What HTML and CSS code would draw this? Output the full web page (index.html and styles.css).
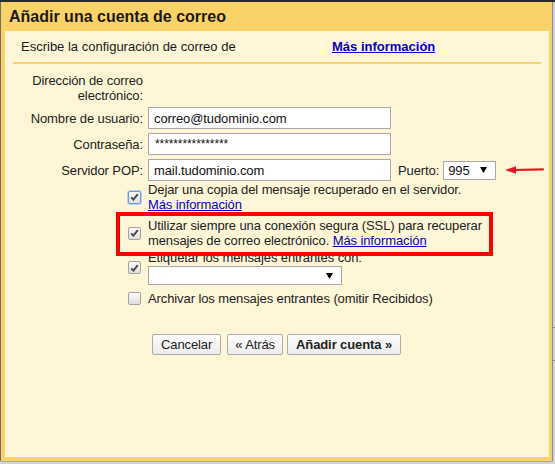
FILE: index.html
```html
<!DOCTYPE html>
<html lang="es">
<head>
<meta charset="utf-8">
<title>Añadir una cuenta de correo</title>
<link rel="stylesheet" href="styles.css">
</head>
<body>
<div class="page">
  <div class="dialog">
    <div class="title">Añadir una cuenta de correo</div>
    <div class="content">
      <div class="sub">
        <span class="sub-text">Escribe la configuración de correo de</span>
        <a class="sub-link" href="#">Más información</a>
      </div>

      <div class="form">
        <div class="label">Dirección de correo electrónico:</div>
        <div></div>

        <div class="label">Nombre de usuario:</div>
        <div class="field"><input class="text" type="text" value="correo@tudominio.com"></div>

        <div class="label">Contraseña:</div>
        <div class="field"><input class="text pass" type="text" value="****************"></div>

        <div class="label">Servidor POP:</div>
        <div class="field">
          <input class="text" type="text" value="mail.tudominio.com">
          <span class="port-label">Puerto:</span>
          <div class="select port"><span>995</span><svg class="caret" width="7" height="6" viewBox="0 0 7 6"><polygon points="0,0 7,0 3.5,6" fill="#000"/></svg></div>
          <svg class="red-arrow" width="40" height="10" viewBox="0 0 40 10"><polygon points="0,5 11,1.2 11,8.8" fill="#e8141b"/><path d="M10 5 L38 4.3" stroke="#e8141b" stroke-width="2.2" stroke-linecap="round" fill="none"/></svg>
        </div>
      </div>

      <div class="options">
        <div class="opt">
          <span class="cb focus"><svg width="9" height="8" viewBox="0 0 9 8"><path d="M1.2 4.4 L3.4 6.6 L7.8 1.2" stroke="#4a4a4a" stroke-width="2" fill="none"/></svg></span>
          <div class="opt-text">Dejar una copia del mensaje recuperado en el servidor.<br><a href="#">Más información</a></div>
        </div>
        <div class="highlight">
          <div class="opt">
            <span class="cb"><svg width="9" height="8" viewBox="0 0 9 8"><path d="M1.2 4.4 L3.4 6.6 L7.8 1.2" stroke="#4a4a4a" stroke-width="2" fill="none"/></svg></span>
            <div class="opt-text">Utilizar siempre una conexión segura (SSL) para recuperar mensajes de correo electrónico. <a href="#">Más información</a></div>
          </div>
        </div>
        <div class="opt label-opt">
          <span class="cb"><svg width="9" height="8" viewBox="0 0 9 8"><path d="M1.2 4.4 L3.4 6.6 L7.8 1.2" stroke="#4a4a4a" stroke-width="2" fill="none"/></svg></span>
          <div class="opt-text">
            <div>Etiquetar los mensajes entrantes con:</div>
            <div class="select labels"><span></span><svg class="caret" width="7" height="6" viewBox="0 0 7 6"><polygon points="0,0 7,0 3.5,6" fill="#000"/></svg></div>
          </div>
        </div>
        <div class="opt archive">
          <span class="cb"></span>
          <div class="opt-text">Archivar los mensajes entrantes (omitir Recibidos)</div>
        </div>
      </div>

      <div class="buttons">
        <button class="btn cancel" type="button">Cancelar</button>
        <button class="btn back" type="button">« Atrás</button>
        <button class="btn primary" type="button">Añadir cuenta »</button>
      </div>
    </div>
  </div>
</div>
</body>
</html>
```

FILE: styles.css
```css
*, *::before, *::after { box-sizing: border-box; }
html, body { margin: 0; padding: 0; }
body {
  font-family: "Liberation Sans", Arial, sans-serif;
  font-size: 13px;
  letter-spacing: -0.1px;
  color: #222;
  background: #d2d2d2;
}
.page {
  width: 555px;
  height: 464px;
  border-top: 2px solid #2b2b2b;
  padding-left: 1px;
  overflow: hidden;
  background:
    linear-gradient(#8a8a8a, #8a8a8a) 0 325px / 100% 1px no-repeat,
    linear-gradient(#8a8a8a, #8a8a8a) 0 358px / 100% 1px no-repeat,
    #d2d2d2;
}
.dialog {
  width: 551px;
  height: 459px;
  background: #f9d268;
  display: flex;
  flex-direction: column;
  padding: 0 3px 4px 4px;
  box-shadow: -1px 0 0 #6e6e6e, 1px 0 0 #8c8c8c, 0 1px 0 #a8a8a8;
}
.title {
  height: 29px;
  line-height: 29px;
  padding-left: 4px;
  font-size: 16px;
  font-weight: bold;
  letter-spacing: 0;
  color: #1a1a1a;
}
.content {
  flex: 1;
  background: #fff6d8;
}
.sub {
  display: flex;
  margin: 0 8px;
  padding: 8px 8px;
  line-height: 15px;
  border-bottom: 2px solid #f9d268;
  color: #1a1a1a;
  letter-spacing: 0;
}
.sub-text { width: 311px; }
.sub-link {
  color: #0000cc;
  font-weight: bold;
  text-decoration: underline;
}
.form {
  display: grid;
  grid-template-columns: 130px auto;
  column-gap: 5px;
  row-gap: 4px;
  align-items: center;
  padding: 9px 0 0 8px;
}
.label {
  text-align: right;
  line-height: 15px;
}
.field {
  display: flex;
  align-items: center;
}
.text {
  width: 243px;
  height: 22px;
  margin: 0;
  padding: 0 5px;
  border: 1px solid #a9a9a9;
  background: #fff;
  font-family: "Liberation Sans", Arial, sans-serif;
  font-size: 13px;
  letter-spacing: -0.1px;
  color: #111;
  outline: none;
}
.text.pass { font-size: 12px; letter-spacing: -0.1px; padding-left: 6px; }
.port-label { margin-left: 7px; }
.select {
  display: flex;
  align-items: center;
  justify-content: space-between;
  height: 19px;
  border: 1px solid #a9a9a9;
  background: #fff;
  color: #111;
  padding: 0 8px 0 4px;
}
.select.port { margin-left: 4px; width: 53px; }
.select.labels { width: 194px; margin-top: 1px; }
.caret { display: block; }
.red-arrow { margin-left: 9px; display: block; }

.options {
  padding-left: 123px;
  margin-top: 1px;
}
.opt {
  display: grid;
  grid-template-columns: 13px 345px;
  column-gap: 7px;
  align-items: center;
  line-height: 15px;
}
.opt a { color: #0000cc; text-decoration: underline; }
.highlight {
  position: relative;
  margin-top: 6px;
}
.highlight::after {
  content: "";
  position: absolute;
  left: -12px;
  top: -6px;
  width: 377px;
  height: 44px;
  border: 4px solid #ff0000;
}
.label-opt { margin-top: 2px; }
.archive { margin-top: 6px; }
.cb {
  width: 13px;
  height: 13px;
  border: 1px solid #a3a3a3;
  border-radius: 2px;
  background: linear-gradient(#fbfbfb, #dedede);
  display: flex;
  align-items: center;
  justify-content: center;
}
.cb.focus {
  border-color: #6f98d6;
  box-shadow: 0 0 0 1px #bcd0ee;
}
.buttons {
  display: flex;
  margin-top: 28px;
  padding-left: 147px;
}
.btn {
  height: 21px;
  margin: 0 4px 0 0;
  padding: 0 8px;
  border: 1px solid #acacac;
  border-radius: 2px;
  background: linear-gradient(#fdfdfd, #ececec);
  font-family: "Liberation Sans", Arial, sans-serif;
  font-size: 13px;
  letter-spacing: -0.1px;
  color: #222;
  line-height: 19px;
}
.btn.cancel { margin-right: 6px; }
.btn.back { padding: 0 7px; }
.btn.primary { font-weight: bold; }
```
